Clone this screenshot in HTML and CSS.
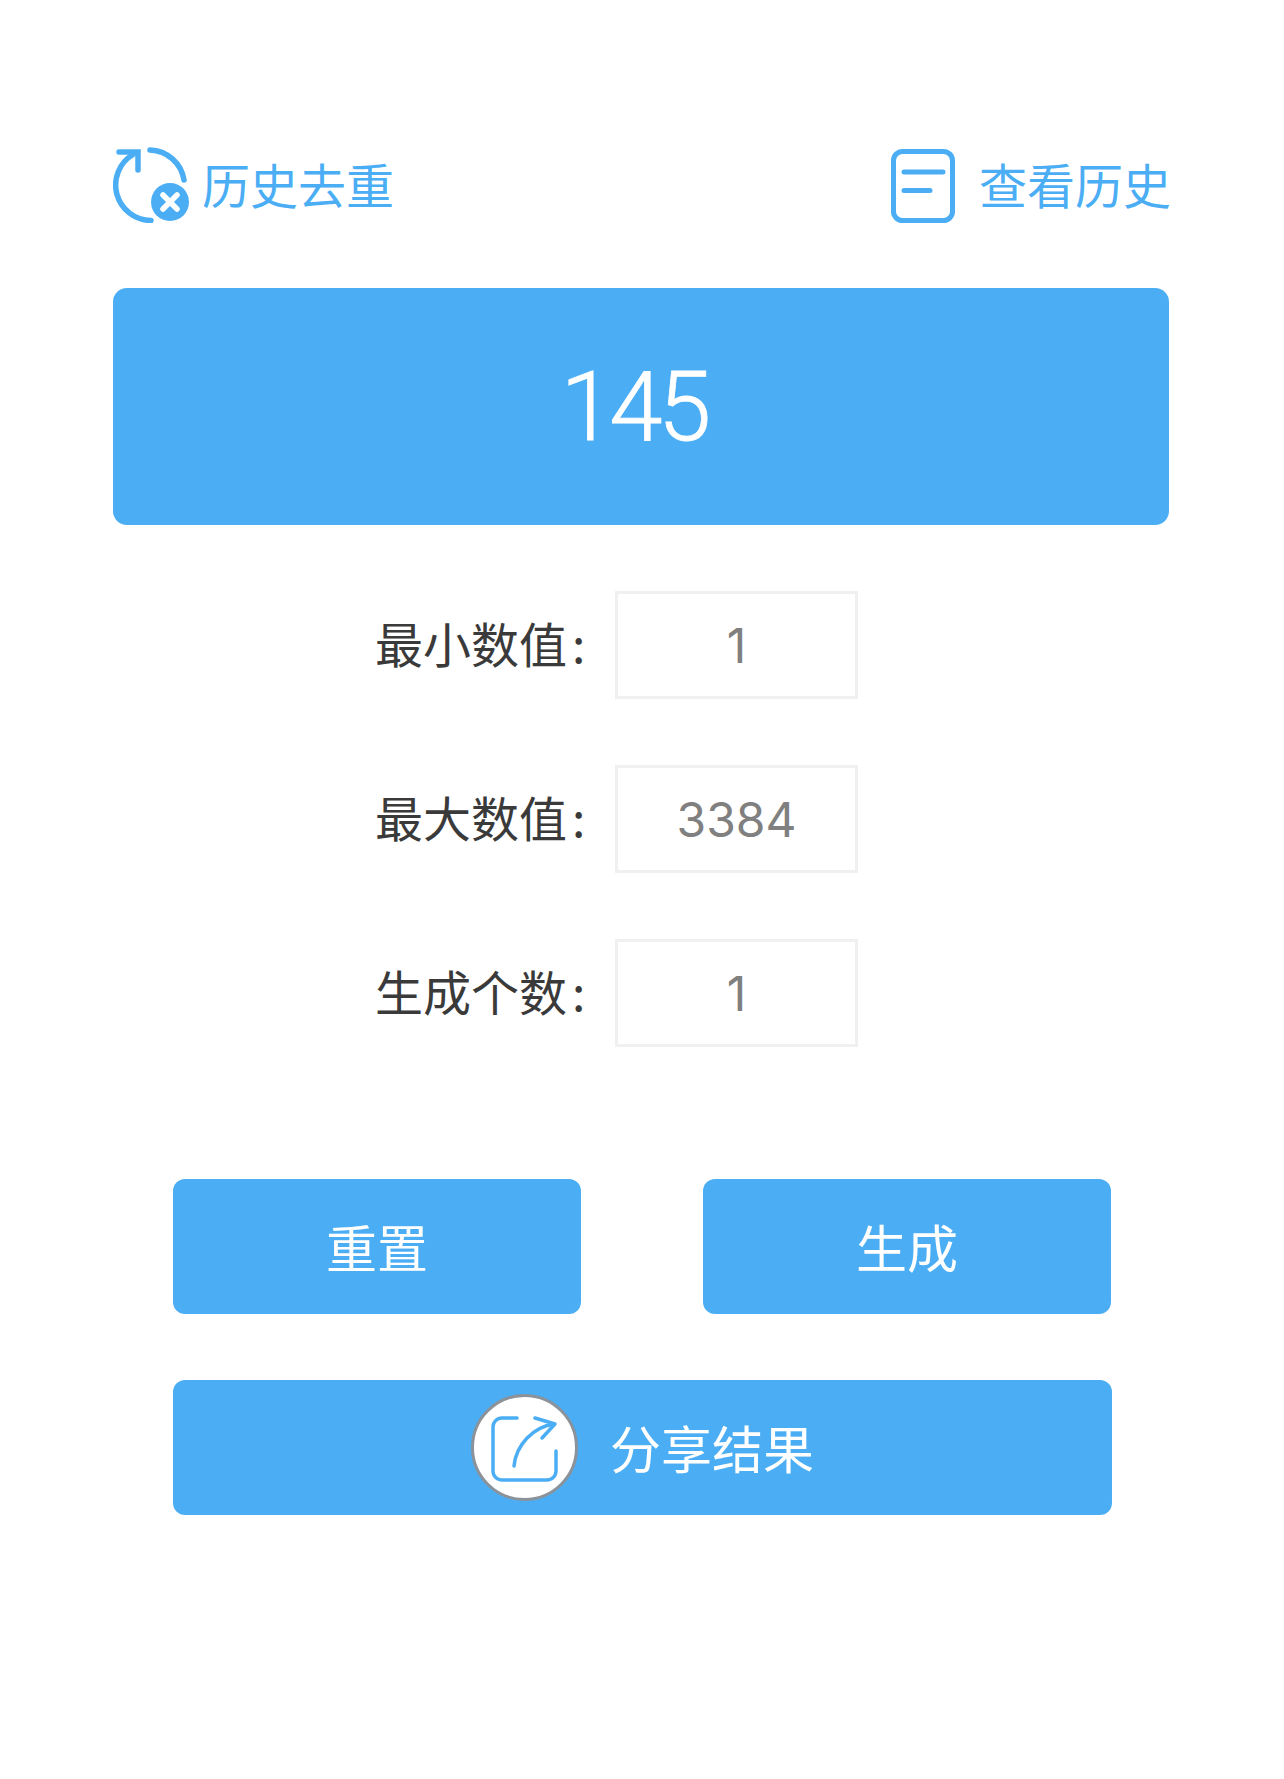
FILE: index.html
```html
<!DOCTYPE html>
<html lang="en">

<head>
    <meta charset="UTF-8">
    <meta name="viewport" content="width=device-width, initial-scale=1.0">
    <title>随机数生成</title>
    <link rel="stylesheet" href="styles.css">
</head>

<body>
    <div class="page">
        <div class="top-bar">
            <div class="top-link">
                <svg class="icon-dedupe" viewBox="0 0 76 76" fill="none">
                    <path d="M37 3A35.5 35.5 0 0 1 71 33" />
                    <path d="M20 7.5A35.5 35.5 0 0 0 38 73.5" />
                    <path d="M6 5H25V23" />
                    <circle class="badge" cx="57" cy="55" r="19" />
                    <path class="badge-x" d="M50 48L64 62M64 48L50 62" />
                </svg>
                <span class="top-label">历史去重</span>
            </div>
            <div class="top-link top-link-history">
                <svg class="icon-history" viewBox="0 0 64 74" fill="none">
                    <rect x="2.5" y="2.5" width="59" height="69" rx="9" />
                    <path d="M13 23H52M13 41.5H39" />
                </svg>
                <span class="top-label">查看历史</span>
            </div>
        </div>

        <div class="result-panel">145</div>

        <form class="range-form">
            <div class="form-row">
                <label for="minValue">最小数值<span class="colon">:</span></label>
                <input type="text" id="minValue" value="1">
            </div>
            <div class="form-row">
                <label for="maxValue">最大数值<span class="colon">:</span></label>
                <input type="text" id="maxValue" value="3384">
            </div>
            <div class="form-row">
                <label for="count">生成个数<span class="colon">:</span></label>
                <input type="text" id="count" value="1">
            </div>
        </form>

        <div class="actions">
            <div class="action-row">
                <button type="button" class="action-button">重置</button>
                <button type="button" class="action-button">生成</button>
            </div>
            <button type="button" class="action-button share-button">
                <span class="share-circle">
                    <svg class="icon-share" viewBox="0 0 106 106" fill="none">
                        <path d="M46 23H31a9 9 0 0 0-9 9V76a9 9 0 0 0 9 9H76a9 9 0 0 0 9-9V56" />
                        <path d="M43 71C45 50 62 32 83 29" />
                        <path d="M64 23L84 29L71 43" />
                    </svg>
                </span>
                <span class="share-label">分享结果</span>
            </button>
        </div>
    </div>
</body>
</html>
```

FILE: styles.css
```css
:root {
    --primary-color: #4BAEF5;
    --text-color: #3A3A3A;
    --value-color: #808080;
    --border-color: #F0F0F0;
}

* {
    box-sizing: border-box;
    margin: 0;
    padding: 0;
}

body {
    font-family: "Noto Sans CJK SC", "Liberation Sans", sans-serif;
    font-size: 48px;
    background-color: white;
    color: var(--text-color);
}

.page {
    width: 1284px;
    height: 1779px;
    padding: 147px 115px 0 113px;
}

.top-bar {
    display: flex;
    justify-content: space-between;
    align-items: center;
    height: 76px;
    margin-right: -2px;
    color: var(--primary-color);
}

.top-link {
    display: flex;
    align-items: center;
    gap: 13px;
    line-height: 76px;
}

.top-link-history {
    gap: 24px;
}

.top-label {
    padding-bottom: 4px;
}

.icon-dedupe {
    width: 76px;
    height: 76px;
    stroke: var(--primary-color);
    stroke-width: 5.5;
    stroke-linecap: round;
}

.icon-dedupe .badge {
    fill: var(--primary-color);
    stroke: none;
}

.icon-dedupe .badge-x {
    stroke: white;
}

.icon-history {
    width: 64px;
    height: 74px;
    margin-top: 2px;
    stroke: var(--primary-color);
    stroke-width: 5;
    stroke-linecap: round;
}

.result-panel {
    margin-top: 65px;
    height: 237px;
    padding-right: 15px;
    display: flex;
    justify-content: center;
    align-items: center;
    background-color: var(--primary-color);
    border-radius: 14px;
    color: white;
    font-family: Roboto, "Liberation Sans", sans-serif;
    font-weight: 300;
    font-size: 96px;
    letter-spacing: -4.5px;
    -webkit-text-stroke: 0.8px white;
}

.range-form {
    margin-top: 66px;
    padding-left: 262px;
    display: flex;
    flex-direction: column;
    gap: 66px;
}

.form-row {
    display: flex;
    align-items: center;
}

.form-row label {
    width: 240px;
    padding-bottom: 6px;
}

.colon {
    margin-left: 5px;
}

.form-row input {
    width: 243px;
    height: 108px;
    border: 3px solid var(--border-color);
    background-color: white;
    color: var(--value-color);
    text-align: center;
    font-family: Inter, "Liberation Sans", sans-serif;
    font-size: 48px;
}

.actions {
    margin: 132px 57px 0 60px;
    display: flex;
    flex-direction: column;
    gap: 66px;
}

.action-row {
    display: flex;
    justify-content: space-between;
    padding-right: 1px;
}

.action-button {
    width: 408px;
    height: 135px;
    padding-bottom: 2px;
    border: none;
    border-radius: 12px;
    background-color: var(--primary-color);
    color: white;
    font-family: inherit;
    font-size: 51px;
}

.share-button {
    width: 939px;
    display: flex;
    justify-content: center;
    align-items: center;
    gap: 32px;
    padding-bottom: 0;
}

.share-label {
    padding-bottom: 2px;
}

.share-circle {
    width: 107px;
    height: 107px;
    border: 3px solid #8B9299;
    border-radius: 50%;
    background-color: white;
    display: flex;
    justify-content: center;
    align-items: center;
}

.icon-share {
    width: 106px;
    height: 106px;
    flex-shrink: 0;
    stroke: var(--primary-color);
    stroke-width: 3.5;
    stroke-linecap: round;
    stroke-linejoin: round;
}
```
